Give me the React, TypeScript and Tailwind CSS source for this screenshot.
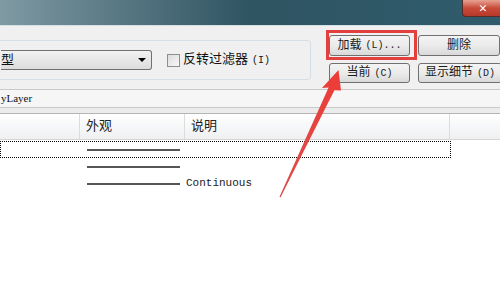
import React from "react";

const cjk = { fontFamily: '"Liberation Mono", "Noto Sans CJK SC", monospace' };

const WinButton = ({ children, className = "" }: { children: React.ReactNode; className?: string }) => (
  <div
    className={`flex items-center justify-center rounded-[3px] border border-[#707070] bg-gradient-to-b from-[#f4f4f4] via-[#ebebeb] to-[#d9d9d9] text-[12px] text-[#1a1a1a] ${className}`}
    style={cjk}
  >
    {children}
  </div>
);

const Key = ({ k }: { k: string }) => <span className="ml-[4px] text-[10px]">{k}</span>;

const Arrow = () => (
  <svg className="pointer-events-none absolute left-0 top-0" width="500" height="300" viewBox="0 0 500 300">
    <defs>
      <linearGradient id="ar" x1="0" y1="1" x2="0" y2="0">
        <stop offset="0" stopColor="#d9504f" />
        <stop offset="1" stopColor="#ee3b36" />
      </linearGradient>
    </defs>
    <polygon points="280.5,197.5 279.5,196.8 328.6,87.6 322,88 338.5,70 341,90.5 334.4,90.2" fill="url(#ar)" />
  </svg>
);

export default function App() {
  return (
    <div className="relative h-[300px] w-[500px] overflow-hidden bg-white" style={cjk}>
      {/* title bar */}
      <div className="flex h-[25px] justify-end bg-gradient-to-r from-[#7f9aa3] via-[#2f5462] to-[#2f5c6c]">
        <div className="mr-[-4px] flex h-[17px] w-[42px] items-center justify-center rounded-b-[4px] border border-t-0 border-[#5a2a26] bg-gradient-to-b from-[#e6a293] via-[#c84a39] to-[#b5392b] text-[13px] font-bold leading-none text-white">
          ✕
        </div>
      </div>
      <div className="h-px bg-[#d6e0e4]" />

      {/* upper controls */}
      <div className="flex h-[63px] bg-[#f0f0f0]">
        <div className="ml-[-10px] mt-[14px] flex h-[40px] w-[324px] items-center rounded-[3px] border border-[#d5dfe5]">
          <div className="ml-[10px] flex h-[20px] w-[151px] items-center justify-between rounded-r-[3px] border border-l-0 border-[#707070] bg-gradient-to-b from-[#f2f2f2] to-[#dcdcdc] pr-[5px]">
            <span className="text-[13px] leading-none text-[#111]">型</span>
            <span className="h-0 w-0 border-x-[4px] border-t-[4px] border-x-transparent border-t-black" />
          </div>
          <div className="ml-[15px] h-[13px] w-[13px] border border-[#8e8f8f] bg-gradient-to-br from-[#dcdcdc] to-[#f8f8f8]" />
          <span className="ml-[3px] text-[13px] text-[#111]">反转过滤器</span>
          <span className="ml-[4px] text-[10px] text-[#111]">(I)</span>
        </div>
        <div className="ml-[18px] mt-[9px] grid h-[48px] grid-cols-[81px_82px] grid-rows-[21px_20px] gap-x-[8px] gap-y-[7px]">
          <WinButton className="border-[#3c7fb1] from-[#eaf6fd] via-[#d9f0fc] to-[#a7d9f5]">
            加载<Key k="(L)..." />
          </WinButton>
          <WinButton>删除</WinButton>
          <WinButton>
            当前<Key k="(C)" />
          </WinButton>
          <WinButton className="mr-[-2px]">
            显示细节<Key k="(D)" />
          </WinButton>
        </div>
      </div>

      {/* current linetype */}
      <div className="flex h-[19px] items-center border-y border-[#c9c9c9] bg-[#f6f6f6]">
        <span className="ml-[1px] text-[11px] text-[#111]" style={{ fontFamily: '"Liberation Serif", serif' }}>
          yLayer
        </span>
      </div>
      <div className="h-[5px] bg-[#ececec]" />
      <div className="h-px bg-[#b4b4b4]" />

      {/* list header */}
      <div className="flex h-[26px] border-b border-[#d5d5d5] bg-gradient-to-b from-white to-[#eef0f2] text-[13px] text-[#222]">
        <div className="w-[80px] border-r border-[#dcdcdc]" />
        <div className="flex w-[105px] items-center border-r border-[#dcdcdc] pl-[6px]">外观</div>
        <div className="flex w-[265px] items-center border-r border-[#dcdcdc] pl-[6px]">说明</div>
      </div>

      {/* rows */}
      <div className="mt-px flex h-[17px] w-[451px] items-center border border-dotted border-black">
        <div className="ml-[86px] h-[2px] w-[93px] bg-[#555]" />
      </div>
      <div className="flex h-[17px] w-[451px] items-center">
        <div className="ml-[87px] h-[2px] w-[93px] bg-[#555]" />
      </div>
      <div className="flex h-[17px] w-[451px] items-center">
        <div className="ml-[87px] h-[2px] w-[93px] bg-[#555]" />
        <span className="ml-[6px] text-[11px] text-[#222]">Continuous</span>
      </div>

      {/* annotation */}
      <div className="absolute left-[326px] top-[30px] h-[30px] w-[91px] border-[3px] border-[#e2403e]" />
      <Arrow />
    </div>
  );
}
